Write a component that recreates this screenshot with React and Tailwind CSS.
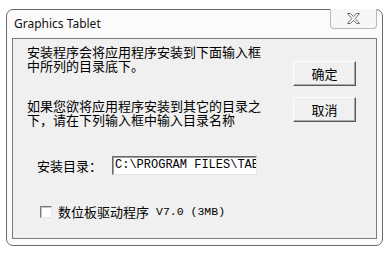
import React from 'react';

const cjk = { fontFamily: '"Noto Sans CJK SC", "Noto Sans", sans-serif' };
const mono = { fontFamily: '"Liberation Mono", "DejaVu Sans Mono", monospace' };

const CloseGlyph = () => (
  <svg width="13" height="11" viewBox="0 0 13 11">
    <polygon
      points="0.5,0.5 3.5,0.5 6.5,3.6 9.5,0.5 12.5,0.5 8.3,5.5 12.5,10.5 9.5,10.5 6.5,7.4 3.5,10.5 0.5,10.5 4.7,5.5"
      fill="#f4f4f4"
      stroke="#707070"
      strokeWidth="1"
      strokeLinejoin="round"
    />
  </svg>
);

const WinButton = ({ children, className = '' }) => (
  <div
    className={`w-[63px] h-[25px] flex items-center justify-center bg-[#f0f0f0] border border-t-[#fdfdfd] border-l-[#fdfdfd] border-r-[#5a5a5a] border-b-[#5a5a5a] shadow-[inset_-1px_-1px_0_#a8a8a8] text-[13px] leading-[14px] text-black ${className}`}
    style={cjk}
  >
    {children}
  </div>
);

const App = () => {
  return (
    <div className="w-[392px] h-[255px] bg-white pt-[9px] pl-[6px]">
      <div className="relative w-[377px] h-[237px] border border-[#6b6b6b] rounded-[7px] bg-[#fbfbfb] flex flex-col">
        {/* title bar */}
        <div className="h-[28px] flex items-center pl-[7px]">
          <span className="text-[12px] text-[#111]" style={{ fontFamily: '"Noto Sans", "Open Sans", sans-serif' }}>
            Graphics Tablet
          </span>
        </div>
        <div className="absolute top-[-1px] right-[5px] w-[47px] h-[20px] border border-t-0 border-[#b9b9b9] rounded-b-[4px] bg-[#f7f7f7] flex items-center justify-center">
          <CloseGlyph />
        </div>

        {/* client area */}
        <div className="ml-[5px] w-[365px] h-[201px] border border-[#7a7a7a] bg-[#f0f0f0] flex flex-col text-black">
          <div className="flex justify-between pl-[14px] pr-[20px]">
            <div className="pt-[6px]" style={cjk}>
              <p className="text-[13px] leading-[14px]">
                安装程序会将应用程序安装到下面输入框<br />中所列的目录底下。
              </p>
              <p className="mt-[26px] text-[13px] leading-[14px]">
                如果您欲将应用程序安装到其它的目录之<br />下，请在下列输入框中输入目录名称
              </p>
            </div>
            <div className="pt-[22px] flex flex-col">
              <WinButton>确定</WinButton>
              <WinButton className="mt-[11px]">取消</WinButton>
            </div>
          </div>

          <div className="mt-[29px] pl-[24px] flex items-center">
            <span className="w-[75px] text-[13px] leading-[19px]" style={cjk}>安装目录：</span>
            <div className="w-[145px] h-[19px] bg-white border border-t-[#6a6a6a] border-l-[#6a6a6a] border-r-[#e4e4e4] border-b-[#e4e4e4] shadow-[inset_1px_1px_0_#a0a0a0] overflow-hidden whitespace-nowrap pl-[2px] flex items-center">
              <span className="text-[12px] leading-[17px]" style={mono}>C:\PROGRAM FILES\TABLET</span>
            </div>
          </div>

          <div className="mt-[30px] pl-[27px] flex items-center">
            <div className="w-[12px] h-[12px] bg-white border border-t-[#7a7a7a] border-l-[#7a7a7a] border-r-[#e6e6e6] border-b-[#e6e6e6] shadow-[inset_1px_1px_0_#c4c4c4]" />
            <span className="ml-[6px] text-[13px] leading-[14px]" style={cjk}>数位板驱动程序</span>
            <span className="ml-[7px] text-[11.5px] leading-[14px]" style={mono}>V7.0 (3MB)</span>
          </div>
        </div>
      </div>
    </div>
  );
};

export default App;
